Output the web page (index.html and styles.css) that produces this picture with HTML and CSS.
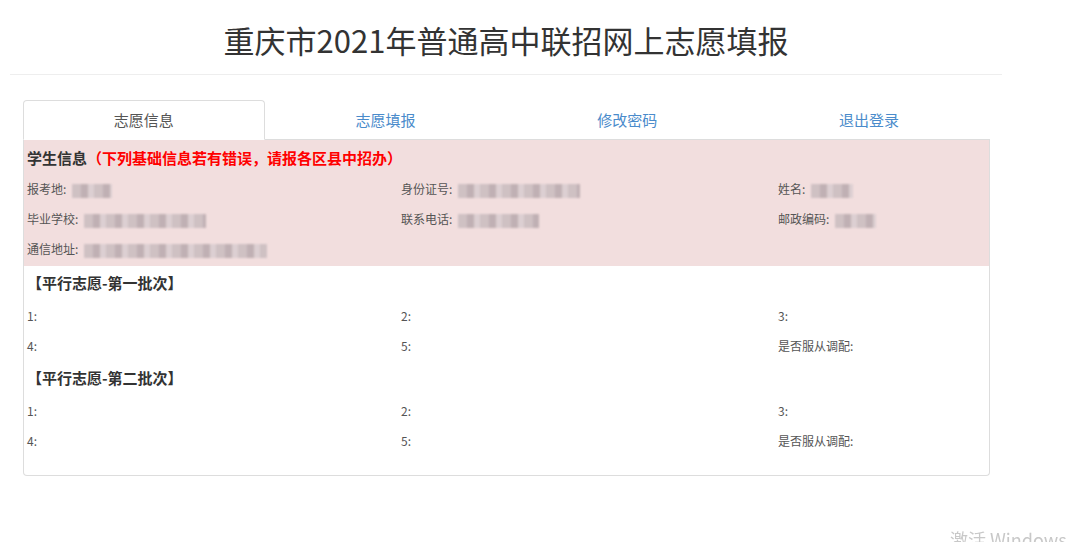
FILE: index.html
```html
<!DOCTYPE html>
<html lang="zh-CN">
<head>
    <meta charset="UTF-8">
    <meta name="viewport" content="width=device-width, initial-scale=1.0">
    <title>重庆市2021年普通高中联招网上志愿填报</title>
    <link rel="stylesheet" href="styles.css">
</head>
<body>
    <div class="page">
        <h1 class="title">重庆市2021年普通高中联招网上志愿填报</h1>
        <hr class="title-line">

        <div class="main">
            <ul class="tabs">
                <li class="tab active"><a href="#">志愿信息</a></li>
                <li class="tab"><a href="#">志愿填报</a></li>
                <li class="tab"><a href="#">修改密码</a></li>
                <li class="tab"><a href="#">退出登录</a></li>
            </ul>

            <div class="panel">
                <!-- 学生基础信息 -->
                <div class="student">
                    <div class="heading">学生信息<span class="warn">（下列基础信息若有错误，请报各区县中招办）</span></div>
                    <div class="grid">
                        <div class="cell">报考地:<span class="mask" style="width: 40px"></span></div>
                        <div class="cell">身份证号:<span class="mask" style="width: 122px"></span></div>
                        <div class="cell">姓名:<span class="mask" style="width: 42px"></span></div>

                        <div class="cell">毕业学校:<span class="mask" style="width: 122px"></span></div>
                        <div class="cell">联系电话:<span class="mask" style="width: 81px"></span></div>
                        <div class="cell">邮政编码:<span class="mask" style="width: 41px"></span></div>

                        <div class="cell">通信地址:<span class="mask" style="width: 183px"></span></div>
                    </div>
                </div>

                <!-- 第一批次 -->
                <div class="section">
                    <div class="heading">【平行志愿-第一批次】</div>
                    <div class="grid">
                        <div class="cell">1:</div>
                        <div class="cell">2:</div>
                        <div class="cell">3:</div>
                        <div class="cell">4:</div>
                        <div class="cell">5:</div>
                        <div class="cell">是否服从调配:</div>
                    </div>
                </div>

                <!-- 第二批次 -->
                <div class="section">
                    <div class="heading">【平行志愿-第二批次】</div>
                    <div class="grid">
                        <div class="cell">1:</div>
                        <div class="cell">2:</div>
                        <div class="cell">3:</div>
                        <div class="cell">4:</div>
                        <div class="cell">5:</div>
                        <div class="cell">是否服从调配:</div>
                    </div>
                </div>
            </div>
        </div>
    </div>

    <div class="watermark">激活 Windows</div>
</body>
</html>
```

FILE: styles.css
```css
body {
    font-family: "Noto Sans CJK SC", "Noto Sans", sans-serif;
    background-color: #fff;
    color: #333;
    margin: 0;
    padding: 0;
    overflow: hidden;
}

.page {
    width: 992px;
    margin-left: 10px;
}

.title {
    font-size: 31px;
    font-weight: normal;
    line-height: 34px;
    text-align: center;
    color: #333;
    margin: 23px 0 17px;
}

.title-line {
    border: none;
    border-top: 1px solid #eee;
    margin: 0;
}

.main {
    padding: 25px 12px 0 13px;
}

.tabs {
    list-style: none;
    margin: 0;
    padding: 0;
    display: flex;
    border-bottom: 1px solid #ddd;
}

.tab {
    flex: 1;
    margin-bottom: -1px;
}

.tab a {
    display: block;
    height: 38px;
    line-height: 38px;
    text-align: center;
    font-size: 15px;
    color: #4a8bcb;
    text-decoration: none;
    border: 1px solid transparent;
    border-radius: 4px 4px 0 0;
}

.tab.active a {
    color: #555;
    background-color: #fff;
    border-color: #ddd;
    border-bottom-color: #fff;
}

.panel {
    border: 1px solid #ddd;
    border-top: none;
    border-radius: 0 0 4px 4px;
    padding-bottom: 19px;
}

.student {
    background-color: #f2dede;
    padding: 8px 3px 2px;
}

.heading {
    font-size: 15px;
    font-weight: bold;
    line-height: 20px;
    color: #333;
}

.warn {
    color: #f00;
}

.student .heading {
    margin-bottom: 6px;
}

.section {
    padding: 0 3px;
}

.section .heading {
    margin: 7px 0 8px;
}

.grid {
    display: grid;
    grid-template-columns: 374px 377px auto;
}

.cell {
    font-size: 12px;
    line-height: 30px;
    height: 30px;
    color: #555;
    white-space: nowrap;
}

.mask {
    display: inline-block;
    height: 14px;
    vertical-align: middle;
    margin-left: 6px;
    background: repeating-linear-gradient(90deg, #c9bcbf 0, #c9bcbf 9px, #b8a9ad 9px, #b8a9ad 16px, #d9cdd0 16px, #d9cdd0 22px);
    filter: blur(1.2px);
    opacity: 0.85;
}

.watermark {
    position: fixed;
    left: 950px;
    top: 526px;
    font-family: "Noto Sans CJK SC", "Noto Sans", sans-serif;
    font-size: 18px;
    color: #c8c8c8;
    white-space: nowrap;
}
```
